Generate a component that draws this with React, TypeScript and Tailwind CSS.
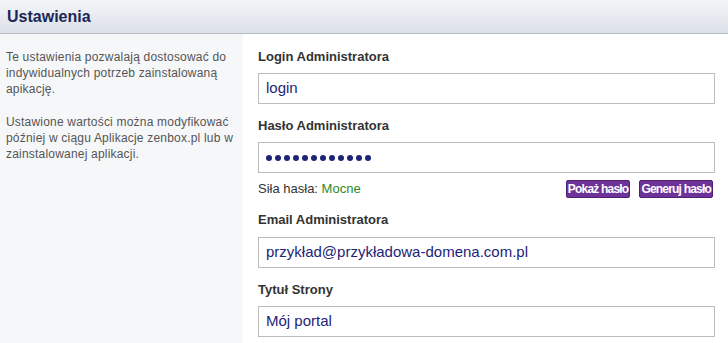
export default function App() {
  const dots = Array.from({ length: 12 });

  return (
    <div className="w-[728px] h-[343px] overflow-hidden bg-white font-['Liberation_Sans',Arial,sans-serif]">
      <header className="h-[34px] flex items-center px-[7px] border-b border-[#b8bdc5] bg-gradient-to-b from-[#f3f5f8] to-[#dce1e8]">
        <h1 className="text-[16px] font-bold text-[#1c2657]">Ustawienia</h1>
      </header>

      <div className="flex h-[309px]">
        <aside className="w-[243px] shrink-0 bg-[#f6f7f9] px-[6px] pt-[15px] text-[12px] tracking-[0.2px] leading-[16px] text-[#555]">
          <p>Te ustawienia pozwalają dostosować do indywidualnych potrzeb zainstalowaną apikację.</p>
          <p className="mt-[17px]">Ustawione wartości można modyfikować później w ciągu Aplikacje zenbox.pl lub w zainstalowanej aplikacji.</p>
        </aside>

        <main className="flex-1 pl-[15px] pr-[13px] pt-[15px]">
          <Field label="Login Administratora" value="login" />

          <div className="mt-[14px]">
            <Label>Hasło Administratora</Label>
            <div className="mt-[8px] h-[31px] border border-[#bcbcbc] flex items-center pl-[7px] gap-[3px]">
              {dots.map((_, i) => (
                <span key={i} className="w-[6px] h-[6px] rounded-full bg-[#1e2478]" />
              ))}
            </div>
            <div className="mt-[7px] h-[18px] flex items-center">
              <span className="text-[13px] text-[#333]">
                Siła hasła: <span className="text-[#2b8a2b]">Mocne</span>
              </span>
              <div className="ml-auto flex gap-[9px] pr-[2px]">
                <button className="h-[18px] px-[1px] rounded-[2px] bg-[#6e3399] border border-[#4e1f73] text-white text-[12px] tracking-[-0.8px] font-bold leading-none">
                  Pokaż hasło
                </button>
                <button className="h-[18px] px-[1px] rounded-[2px] bg-[#6e3399] border border-[#4e1f73] text-white text-[12px] tracking-[-0.8px] font-bold leading-none">
                  Generuj hasło
                </button>
              </div>
            </div>
          </div>

          <div className="mt-[14px]">
            <Field label="Email Administratora" value="przykład@przykładowa-domena.com.pl" gap="mt-[9px]" />
          </div>

          <div className="mt-[14px]">
            <Field label="Tytuł Strony" value="Mój portal" />
          </div>
        </main>
      </div>
    </div>
  );
}

function Label({ children }: { children: React.ReactNode }) {
  return <div className="text-[13px] leading-[16px] font-bold text-[#333]">{children}</div>;
}

function Field({ label, value, gap = 'mt-[8px]' }: { label: string; value: string; gap?: string }) {
  return (
    <div>
      <Label>{label}</Label>
      <div className={`${gap} h-[31px] border border-[#bcbcbc] flex items-center px-[7px] text-[15px] text-[#1e2478]`}>
        {value}
      </div>
    </div>
  );
}
